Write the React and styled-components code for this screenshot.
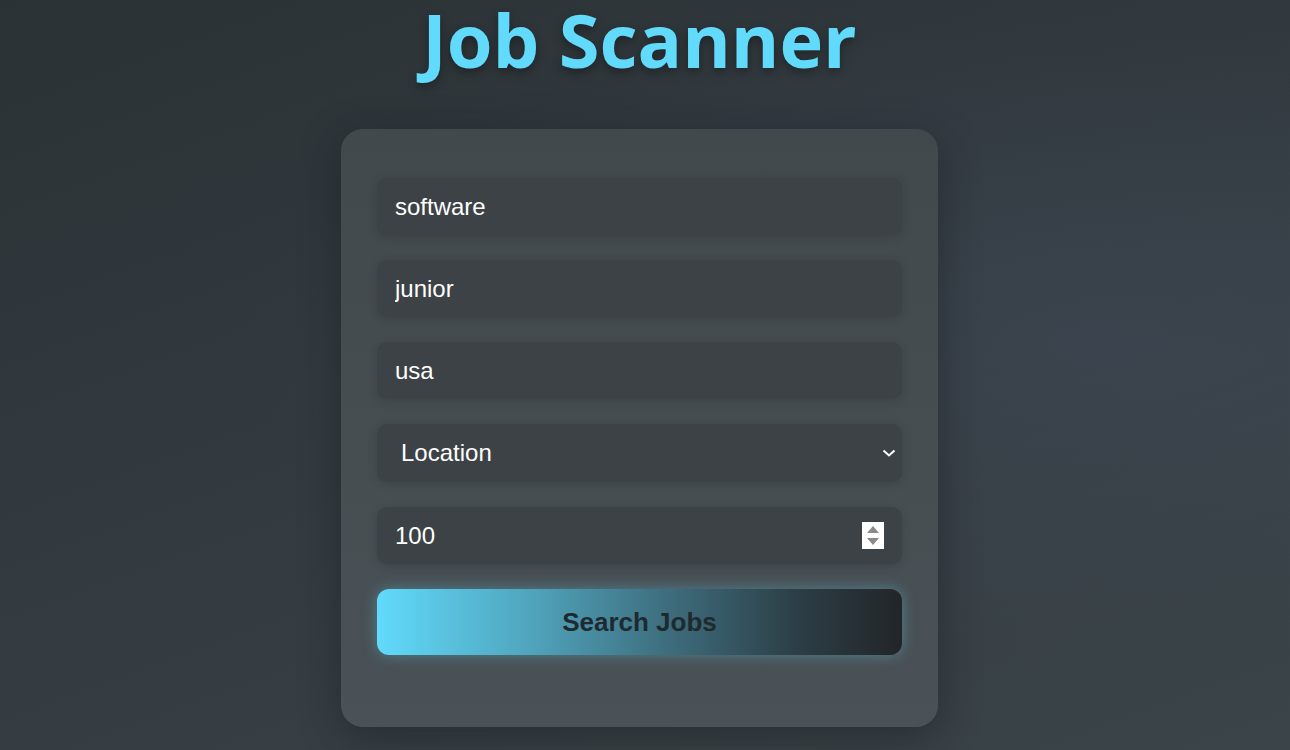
import React, { useState } from 'react';
import styled, { createGlobalStyle } from 'styled-components';

const GlobalStyle = createGlobalStyle`
  html, body {
    margin: 0;
    padding: 0;
  }
  body {
    min-height: 100vh;
    background:
      radial-gradient(ellipse at 85% 45%, rgba(70, 80, 100, 0.35), transparent 55%),
      linear-gradient(160deg, #2b3236 0%, #333b40 50%, #3b4448 100%);
    font-family: "Liberation Sans", Arial, sans-serif;
    overflow: hidden;
  }
`;

const Page = styled.div`
  height: 750px;
  padding-right: 11px;
  display: flex;
  flex-direction: column;
  align-items: center;
`;

const Title = styled.h1`
  margin: 0;
  font-family: "Open Sans", "Noto Sans", sans-serif;
  font-weight: 700;
  font-size: 74px;
  line-height: 80px;
  color: #61dafb;
  text-shadow: 0 4px 10px rgba(0, 0, 0, 0.35);
`;

const Card = styled.form`
  margin-top: 49px;
  width: 597px;
  box-sizing: border-box;
  padding: 49px 36px 72px;
  border-radius: 22px;
  background: linear-gradient(180deg, #42494c 0%, #4a5257 100%);
  box-shadow: 0 10px 40px rgba(20, 25, 28, 0.45);
  display: flex;
  flex-direction: column;
  gap: 25px;
`;

const Field = styled.div`
  height: ${(p) => p.h || 57}px;
  border-radius: 10px;
  background: #3c4245;
  box-shadow: 0 2px 8px rgba(30, 35, 38, 0.25);
  display: flex;
  align-items: center;
  padding: 0 ${(p) => p.pr || 18}px 0 ${(p) => p.pl || 18}px;
`;

const Input = styled.input`
  flex: 1;
  min-width: 0;
  border: none;
  outline: none;
  background: transparent;
  color: #ffffff;
  font-family: "Liberation Sans", Arial, sans-serif;
  font-size: 24px;
  padding: 0;
`;

const SelectText = styled.span`
  flex: 1;
  color: #ffffff;
  font-size: 24px;
`;

const Icon = styled.svg`
  display: block;
  flex: none;
`;

const Button = styled.button`
  height: 66px;
  border: none;
  border-radius: 12px;
  background: linear-gradient(90deg, #61dafb 0%, #4fa3bb 30%, #3e6e7e 55%, #2c3e46 80%, #222528 100%);
  box-shadow: 0 0 14px rgba(97, 218, 251, 0.35);
  color: #1e2a30;
  font-family: "Liberation Sans", Arial, sans-serif;
  font-weight: 700;
  font-size: 26px;
  cursor: pointer;
`;

const App = () => {
  const [keyword, setKeyword] = useState('software');
  const [level, setLevel] = useState('junior');
  const [country, setCountry] = useState('usa');
  const [limit, setLimit] = useState('100');

  return (
    <>
      <GlobalStyle />
      <Page>
        <Title>Job Scanner</Title>
        <Card onSubmit={(e) => e.preventDefault()}>
          <Field>
            <Input value={keyword} onChange={(e) => setKeyword(e.target.value)} />
          </Field>
          <Field>
            <Input value={level} onChange={(e) => setLevel(e.target.value)} />
          </Field>
          <Field>
            <Input value={country} onChange={(e) => setCountry(e.target.value)} />
          </Field>
          <Field pl={24} pr={5} h={58}>
            <SelectText>Location</SelectText>
            <Icon width="16" height="10" viewBox="0 0 16 10">
              <path d="M2.5 2.5 L8 7.5 L13.5 2.5" stroke="#fff" strokeWidth="2" fill="none" />
            </Icon>
          </Field>
          <Field pr={18}>
            <Input value={limit} onChange={(e) => setLimit(e.target.value)} />
            <Icon width="22" height="27" viewBox="0 0 22 27">
              <rect width="22" height="27" fill="#fff" />
              <path d="M5 11 L11 4 L17 11 Z" fill="#8a8a8a" />
              <path d="M5 16 L11 23 L17 16 Z" fill="#8a8a8a" />
            </Icon>
          </Field>
          <Button type="submit">Search Jobs</Button>
        </Card>
      </Page>
    </>
  );
};

export default App;
